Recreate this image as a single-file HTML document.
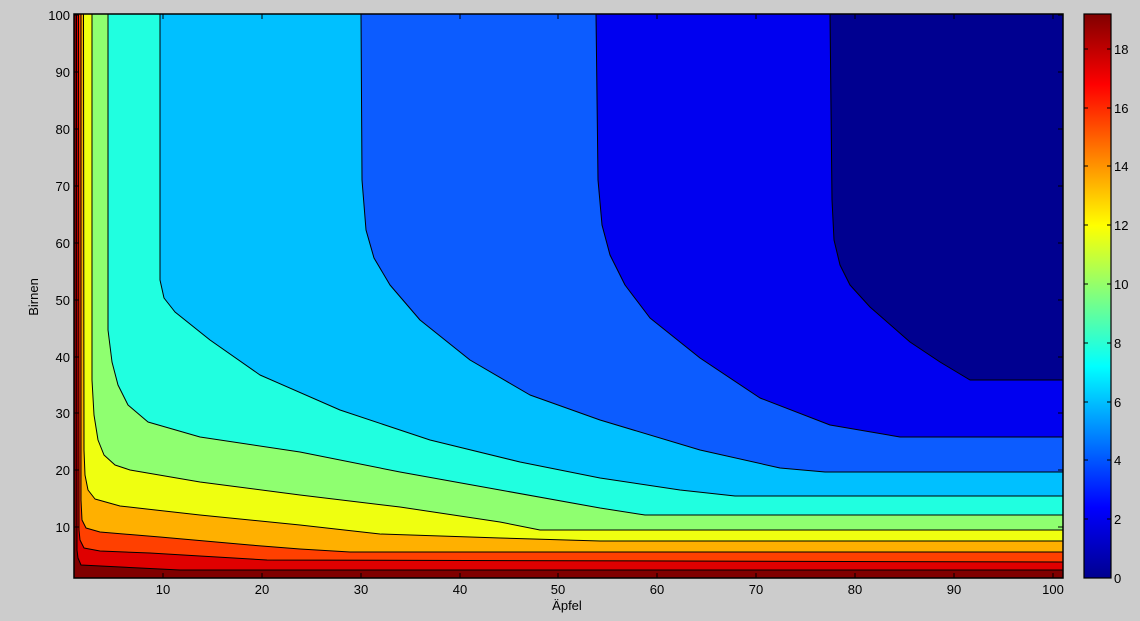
<!DOCTYPE html>
<html><head><meta charset="utf-8"><style>
html,body{margin:0;padding:0;background:#cccccc;}
svg{display:block;}
text{font-family:"Liberation Sans",sans-serif;font-size:13px;fill:#000;}
</style></head><body>
<svg width="1140" height="621" viewBox="0 0 1140 621" xmlns="http://www.w3.org/2000/svg">
<defs>
<linearGradient id="jet" x1="0" y1="1" x2="0" y2="0">
<stop offset="0" stop-color="#00008f"/>
<stop offset="0.125" stop-color="#0000ff"/>
<stop offset="0.375" stop-color="#00ffff"/>
<stop offset="0.625" stop-color="#ffff00"/>
<stop offset="0.875" stop-color="#ff0000"/>
<stop offset="1" stop-color="#800000"/>
</linearGradient>
</defs>
<rect x="0" y="0" width="1140" height="621" fill="#cccccc"/>
<g stroke="#000" stroke-width="1" stroke-linejoin="round">
<rect x="74" y="14" width="989" height="564" fill="#000090"/>
<polygon fill="#0000f0" points="74,14 830,14 832,200 834,240 840,265 850,285 870,307 910,342 940,362 970,380 1063,380 1063,578 74,578"/>
<polygon fill="#0c5cff" points="74,14 596,14 598,180 602,225 610,255 625,285 650,318 700,358 760,398 830,425 900,437 1063,437 1063,578 74,578"/>
<polygon fill="#00c0ff" points="74,14 361,14 362,180 366,230 374,258 390,285 420,320 470,360 530,395 600,420 700,450 780,468 825,472 1063,472 1063,578 74,578"/>
<polygon fill="#20ffe0" points="74,14 160,14 160,280 164,298 175,312 210,340 260,375 340,410 430,440 520,462 600,478 680,490 735,496 1063,496 1063,578 74,578"/>
<polygon fill="#8fff70" points="74,14 108,14 108,330 112,362 118,385 128,405 148,422 200,437 300,452 400,472 500,490 600,508 645,515 1063,515 1063,578 74,578"/>
<polygon fill="#efff10" points="74,14 92,14 92,380 94,415 98,440 104,455 115,465 130,470 200,482 300,495 400,507 500,522 540,530 1063,530 1063,578 74,578"/>
<polygon fill="#ffb000" points="74,14 83.5,14 84,450 85,475 88,490 95,499 120,506 200,515 300,525 380,534 500,538 600,541 1063,541 1063,578 74,578"/>
<polygon fill="#ff4000" points="74,14 81,14 81,500 82,520 86,528 100,532 160,537 250,545 300,549 350,552 1063,552 1063,578 74,578"/>
<polygon fill="#df0000" points="74,14 78.5,14 79,530 80,540 84,548 100,551 150,553 200,556 267,560 1063,562 1063,578 74,578"/>
<polygon fill="#800000" points="74,14 76.5,14 77,550 78,558 81,565 140,568 180,570 1063,570 1063,578 74,578"/>
</g>
<rect x="74" y="14" width="989" height="564" fill="none" stroke="#000" stroke-width="1.5"/>
<g stroke="#000" stroke-width="1">
<path d="M74,527h5M74,470h5M74,413h5M74,357h5M74,300h5M74,243h5M74,186h5M74,129h5M74,72h5M74,15h5
M1063,527h-5M1063,470h-5M1063,413h-5M1063,357h-5M1063,300h-5M1063,243h-5M1063,186h-5M1063,129h-5M1063,72h-5M1063,15h-5
M163,578v-5M262,578v-5M361,578v-5M460,578v-5M558,578v-5M657,578v-5M756,578v-5M855,578v-5M954,578v-5M1053,578v-5
M163,14v5M262,14v5M361,14v5M460,14v5M558,14v5M657,14v5M756,14v5M855,14v5M954,14v5M1053,14v5"/>
</g>
<g text-anchor="end">
<text x="70" y="532">10</text><text x="70" y="475">20</text><text x="70" y="418">30</text><text x="70" y="362">40</text><text x="70" y="305">50</text><text x="70" y="248">60</text><text x="70" y="191">70</text><text x="70" y="134">80</text><text x="70" y="77">90</text><text x="70" y="20">100</text>
</g>
<g text-anchor="middle">
<text x="163" y="594">10</text><text x="262" y="594">20</text><text x="361" y="594">30</text><text x="460" y="594">40</text><text x="558" y="594">50</text><text x="657" y="594">60</text><text x="756" y="594">70</text><text x="855" y="594">80</text><text x="954" y="594">90</text><text x="1053" y="594">100</text>
<text x="567" y="610">Äpfel</text>
<text x="0" y="0" transform="translate(38,297) rotate(-90)">Birnen</text>
</g>
<rect x="1084" y="14" width="27" height="564" fill="url(#jet)" stroke="#000" stroke-width="1.2"/>
<g stroke="#000" stroke-width="1">
<path d="M1084,519h4M1084,460h4M1084,402h4M1084,343h4M1084,284h4M1084,225h4M1084,166h4M1084,108h4M1084,49h4
M1111,519h-4M1111,460h-4M1111,402h-4M1111,343h-4M1111,284h-4M1111,225h-4M1111,166h-4M1111,108h-4M1111,49h-4"/>
</g>
<g>
<text x="1114" y="583">0</text><text x="1114" y="524">2</text><text x="1114" y="465">4</text><text x="1114" y="407">6</text><text x="1114" y="348">8</text><text x="1114" y="289">10</text><text x="1114" y="230">12</text><text x="1114" y="171">14</text><text x="1114" y="113">16</text><text x="1114" y="54">18</text>
</g>
</svg>
</body></html>
